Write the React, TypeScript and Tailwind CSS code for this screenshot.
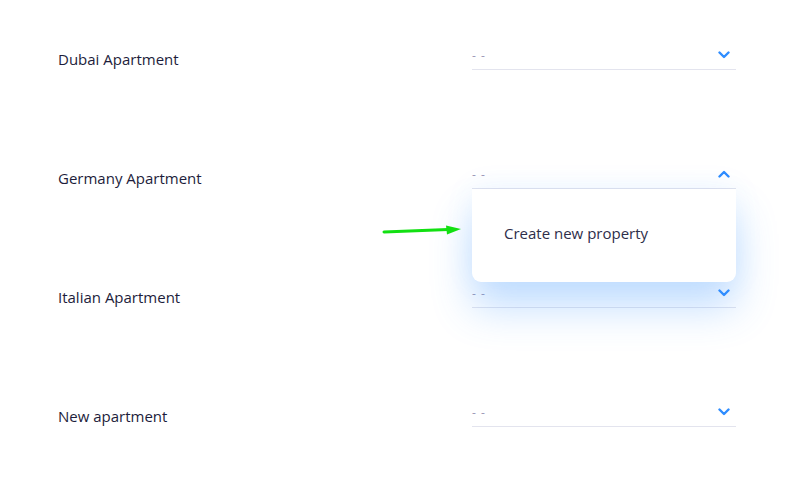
const rows = ["Dubai Apartment", "Germany Apartment", "Italian Apartment", "New apartment"];

function Chevron({ up }: { up?: boolean }) {
  return (
    <svg width="12" height="8" viewBox="0 0 12 8" className="text-[#2f8dff]">
      <path
        d={up ? "M1.5 6.5 L6 2 L10.5 6.5" : "M1.5 1.5 L6 6 L10.5 1.5"}
        fill="none"
        stroke="currentColor"
        strokeWidth="2.4"
        strokeLinecap="round"
        strokeLinejoin="round"
      />
    </svg>
  );
}

function Select({ open }: { open?: boolean }) {
  return (
    <div className="relative -mt-[3px] w-[264px]">
      <div className="flex h-[24px] items-center justify-between border-b border-[#e3e4ee] pr-[6px]">
        <span className="-mt-[3px] text-[12px] leading-none tracking-[1px] text-[#9d9ab8]">- -</span>
        <span className="-mt-[5px]">
          <Chevron up={open} />
        </span>
      </div>
      {open && (
        <div className="absolute left-0 top-[24px] z-10 flex h-[93px] w-full items-center rounded-b-[9px] bg-white pb-[4px] pl-[32px] shadow-[0_26px_40px_rgba(60,150,255,0.3),0_0_30px_rgba(60,150,255,0.08)]">
          <span className="text-[15px] text-[#2e2e4a]">Create new property</span>
        </div>
      )}
    </div>
  );
}

export default function App() {
  return (
    <div
      className="relative h-[482px] w-[797px] bg-white"
      style={{ fontFamily: '"Open Sans", "Noto Sans", sans-serif' }}
    >
      {rows.map((name, i) => (
        <div key={name} className="flex h-[119px] items-center">
          <div className="w-[472px] shrink-0 pl-[58px] text-[15px] text-[#1d1d3b]">{name}</div>
          <Select open={i === 1} />
        </div>
      ))}
      <svg
        className="absolute left-[380px] top-[222px] z-20"
        width="84"
        height="16"
        viewBox="0 0 84 16"
      >
        <path d="M4 10 L68 7.4" stroke="#12e012" strokeWidth="3" strokeLinecap="round" />
        <path d="M66 3.6 L81 7 L67 12.4 Z" fill="#12e012" />
      </svg>
    </div>
  );
}
